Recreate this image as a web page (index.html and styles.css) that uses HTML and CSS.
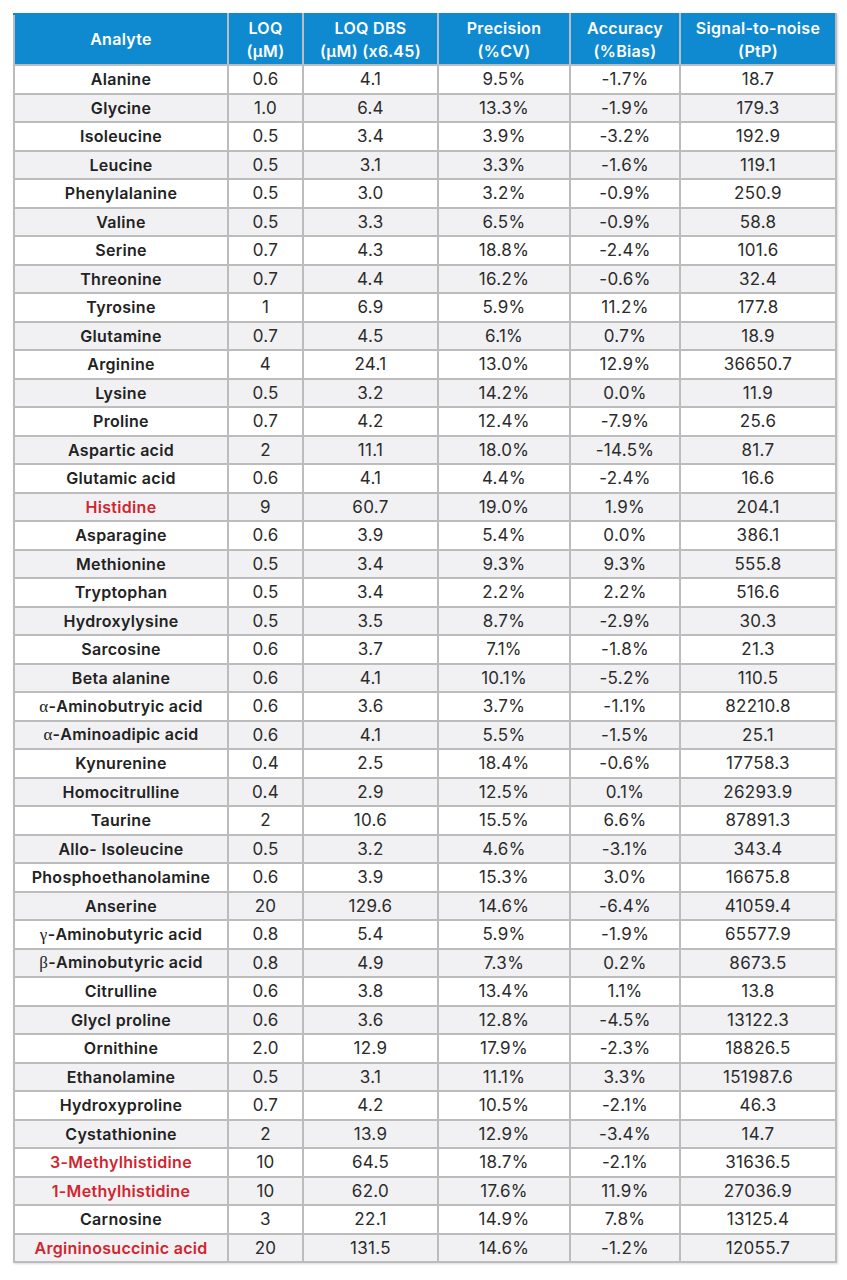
FILE: index.html
```html
<!DOCTYPE html>
<html>
<head>
<meta charset="utf-8">
<link rel="stylesheet" href="styles.css">
</head>
<body>
<table class="data">
<colgroup>
<col class="c1"><col class="c2"><col class="c3"><col class="c4"><col class="c5"><col class="c6">
</colgroup>
<thead>
<tr><th>Analyte</th><th>LOQ<br>(µM)</th><th>LOQ DBS<br>(µM) (x6.45)</th><th>Precision<br>(%CV)</th><th>Accuracy<br>(%Bias)</th><th>Signal-to-noise<br>(PtP)</th></tr>
</thead>
<tbody>
<tr><td class="name">Alanine</td><td>0.6</td><td>4.1</td><td>9.5%</td><td>-1.7%</td><td>18.7</td></tr>
<tr><td class="name">Glycine</td><td>1.0</td><td>6.4</td><td>13.3%</td><td>-1.9%</td><td>179.3</td></tr>
<tr><td class="name">Isoleucine</td><td>0.5</td><td>3.4</td><td>3.9%</td><td>-3.2%</td><td>192.9</td></tr>
<tr><td class="name">Leucine</td><td>0.5</td><td>3.1</td><td>3.3%</td><td>-1.6%</td><td>119.1</td></tr>
<tr><td class="name">Phenylalanine</td><td>0.5</td><td>3.0</td><td>3.2%</td><td>-0.9%</td><td>250.9</td></tr>
<tr><td class="name">Valine</td><td>0.5</td><td>3.3</td><td>6.5%</td><td>-0.9%</td><td>58.8</td></tr>
<tr><td class="name">Serine</td><td>0.7</td><td>4.3</td><td>18.8%</td><td>-2.4%</td><td>101.6</td></tr>
<tr><td class="name">Threonine</td><td>0.7</td><td>4.4</td><td>16.2%</td><td>-0.6%</td><td>32.4</td></tr>
<tr><td class="name">Tyrosine</td><td>1</td><td>6.9</td><td>5.9%</td><td>11.2%</td><td>177.8</td></tr>
<tr><td class="name">Glutamine</td><td>0.7</td><td>4.5</td><td>6.1%</td><td>0.7%</td><td>18.9</td></tr>
<tr><td class="name">Arginine</td><td>4</td><td>24.1</td><td>13.0%</td><td>12.9%</td><td>36650.7</td></tr>
<tr><td class="name">Lysine</td><td>0.5</td><td>3.2</td><td>14.2%</td><td>0.0%</td><td>11.9</td></tr>
<tr><td class="name">Proline</td><td>0.7</td><td>4.2</td><td>12.4%</td><td>-7.9%</td><td>25.6</td></tr>
<tr><td class="name">Aspartic acid</td><td>2</td><td>11.1</td><td>18.0%</td><td>-14.5%</td><td>81.7</td></tr>
<tr><td class="name">Glutamic acid</td><td>0.6</td><td>4.1</td><td>4.4%</td><td>-2.4%</td><td>16.6</td></tr>
<tr><td class="name red">Histidine</td><td>9</td><td>60.7</td><td>19.0%</td><td>1.9%</td><td>204.1</td></tr>
<tr><td class="name">Asparagine</td><td>0.6</td><td>3.9</td><td>5.4%</td><td>0.0%</td><td>386.1</td></tr>
<tr><td class="name">Methionine</td><td>0.5</td><td>3.4</td><td>9.3%</td><td>9.3%</td><td>555.8</td></tr>
<tr><td class="name">Tryptophan</td><td>0.5</td><td>3.4</td><td>2.2%</td><td>2.2%</td><td>516.6</td></tr>
<tr><td class="name">Hydroxylysine</td><td>0.5</td><td>3.5</td><td>8.7%</td><td>-2.9%</td><td>30.3</td></tr>
<tr><td class="name">Sarcosine</td><td>0.6</td><td>3.7</td><td>7.1%</td><td>-1.8%</td><td>21.3</td></tr>
<tr><td class="name">Beta alanine</td><td>0.6</td><td>4.1</td><td>10.1%</td><td>-5.2%</td><td>110.5</td></tr>
<tr><td class="name"><span class="greek">α</span>-Aminobutryic acid</td><td>0.6</td><td>3.6</td><td>3.7%</td><td>-1.1%</td><td>82210.8</td></tr>
<tr><td class="name"><span class="greek">α</span>-Aminoadipic acid</td><td>0.6</td><td>4.1</td><td>5.5%</td><td>-1.5%</td><td>25.1</td></tr>
<tr><td class="name">Kynurenine</td><td>0.4</td><td>2.5</td><td>18.4%</td><td>-0.6%</td><td>17758.3</td></tr>
<tr><td class="name">Homocitrulline</td><td>0.4</td><td>2.9</td><td>12.5%</td><td>0.1%</td><td>26293.9</td></tr>
<tr><td class="name">Taurine</td><td>2</td><td>10.6</td><td>15.5%</td><td>6.6%</td><td>87891.3</td></tr>
<tr><td class="name">Allo- Isoleucine</td><td>0.5</td><td>3.2</td><td>4.6%</td><td>-3.1%</td><td>343.4</td></tr>
<tr><td class="name">Phosphoethanolamine</td><td>0.6</td><td>3.9</td><td>15.3%</td><td>3.0%</td><td>16675.8</td></tr>
<tr><td class="name">Anserine</td><td>20</td><td>129.6</td><td>14.6%</td><td>-6.4%</td><td>41059.4</td></tr>
<tr><td class="name"><span class="greek">γ</span>-Aminobutyric acid</td><td>0.8</td><td>5.4</td><td>5.9%</td><td>-1.9%</td><td>65577.9</td></tr>
<tr><td class="name"><span class="greek">β</span>-Aminobutyric acid</td><td>0.8</td><td>4.9</td><td>7.3%</td><td>0.2%</td><td>8673.5</td></tr>
<tr><td class="name">Citrulline</td><td>0.6</td><td>3.8</td><td>13.4%</td><td>1.1%</td><td>13.8</td></tr>
<tr><td class="name">Glycl proline</td><td>0.6</td><td>3.6</td><td>12.8%</td><td>-4.5%</td><td>13122.3</td></tr>
<tr><td class="name">Ornithine</td><td>2.0</td><td>12.9</td><td>17.9%</td><td>-2.3%</td><td>18826.5</td></tr>
<tr><td class="name">Ethanolamine</td><td>0.5</td><td>3.1</td><td>11.1%</td><td>3.3%</td><td>151987.6</td></tr>
<tr><td class="name">Hydroxyproline</td><td>0.7</td><td>4.2</td><td>10.5%</td><td>-2.1%</td><td>46.3</td></tr>
<tr><td class="name">Cystathionine</td><td>2</td><td>13.9</td><td>12.9%</td><td>-3.4%</td><td>14.7</td></tr>
<tr><td class="name red">3-Methylhistidine</td><td>10</td><td>64.5</td><td>18.7%</td><td>-2.1%</td><td>31636.5</td></tr>
<tr><td class="name red">1-Methylhistidine</td><td>10</td><td>62.0</td><td>17.6%</td><td>11.9%</td><td>27036.9</td></tr>
<tr><td class="name">Carnosine</td><td>3</td><td>22.1</td><td>14.9%</td><td>7.8%</td><td>13125.4</td></tr>
<tr><td class="name red">Argininosuccinic acid</td><td>20</td><td>131.5</td><td>14.6%</td><td>-1.2%</td><td>12055.7</td></tr>
</tbody>
</table>
</body>
</html>
```

FILE: styles.css
```css
html, body {
  margin: 0;
  background: #ffffff;
}
body {
  padding: 13px;
  font-family: Inter, "Liberation Sans", sans-serif;
  color: #222;
}
.data {
  width: 822px;
  border-collapse: collapse;
  table-layout: fixed;
  box-shadow: 1px 1px 2px rgba(0,0,0,0.15);
}
.c1 { width: 214px; }
.c2 { width: 75px; }
.c3 { width: 135px; }
.c4 { width: 132px; }
.c5 { width: 110px; }
.c6 { width: 156px; }
.data th {
  background: #0f8ad0;
  color: #fff;
  font-weight: 600;
  font-size: 16px;
  letter-spacing: 0.3px;
  line-height: 23px;
  height: 49px;
  padding: 0;
  text-align: center;
  border: 2px solid #b9bcc0;
  border-top-color: #0f8ad0;
}
.data td {
  height: 26.5px;
  padding: 0;
  text-align: center;
  font-size: 17px;
  letter-spacing: 0.3px;
  line-height: 20px;
  border: 2px solid #bcbcbc;
  color: #2b2b2b;
}
.data tbody tr:nth-child(odd) td { background: #ffffff; }
.data tbody tr:nth-child(even) td { background: #f1f1f3; }
.data td.name {
  font-weight: 600;
  font-size: 16px;
  color: #222;
  letter-spacing: 0.3px;
}
.data td.red { color: #d1242f; }
.greek {
  font-family: "Liberation Serif", serif;
  font-weight: 400;
  font-size: 17px;
}
```
